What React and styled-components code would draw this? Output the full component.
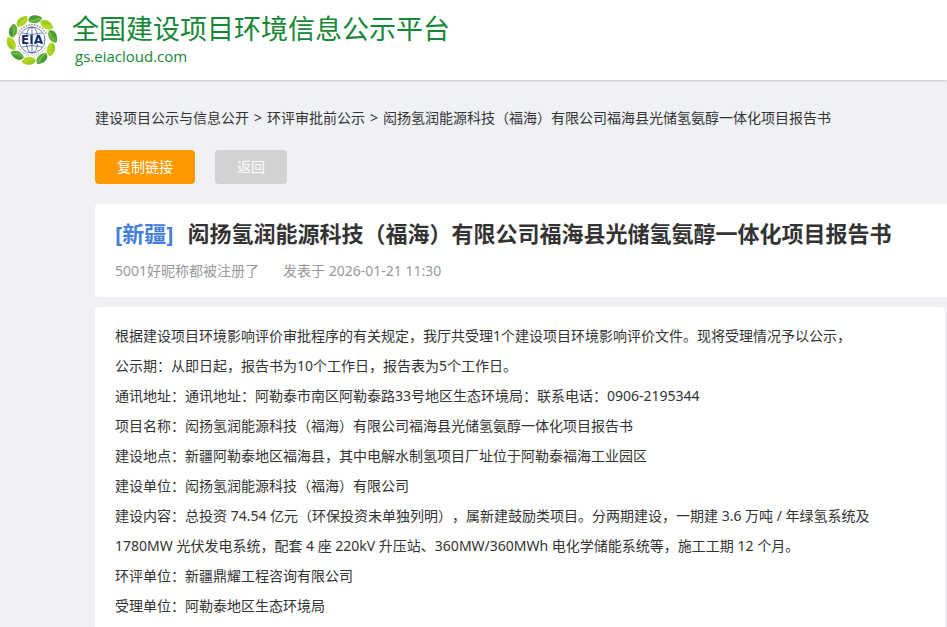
import React from 'react';
import styled, { createGlobalStyle } from 'styled-components';

const GlobalStyle = createGlobalStyle`
  * {
    box-sizing: border-box;
  }
  body {
    margin: 0;
    background: #f0f1f5;
    color: #333;
    font-family: 'Noto Sans', 'Noto Sans CJK SC', sans-serif;
    font-size: 14px;
    line-height: 20px;
    text-spacing-trim: space-all;
  }
`;

const Header = styled.header`
  display: flex;
  align-items: center;
  gap: 14px;
  height: 80px;
  padding: 0 6px;
  background: #fff;
  box-shadow: 0 1px 2px rgba(0, 0, 0, 0.18);
`;

const LogoSvg = styled.svg`
  flex: none;
  width: 52px;
  height: 52px;
`;

const Brand = styled.div`
  padding-bottom: 4px;
  color: #168736;
`;

const SiteName = styled.div`
  font-family: 'Noto Sans CJK SC', sans-serif;
  font-size: 27px;
  font-weight: 400;
  line-height: 36px;
`;

const Domain = styled.div`
  padding-left: 3px;
  font-family: 'Open Sans', sans-serif;
  font-size: 15px;
  line-height: 20px;
`;

const Main = styled.main`
  padding: 28px 0 0 95px;
`;

const Breadcrumb = styled.nav`
  display: flex;
  gap: 5px;

  a {
    color: inherit;
    text-decoration: none;
  }
`;

const Actions = styled.div`
  display: flex;
  gap: 20px;
  margin: 22px 0 20px;
`;

const Button = styled.button`
  height: 34px;
  padding: 0 22px;
  border: none;
  border-radius: 4px;
  background: ${({ $primary }) => ($primary ? '#ff9900' : '#d2d2d2')};
  color: #fff;
  font: inherit;
  cursor: pointer;
`;

const TitleCard = styled.section`
  padding: 14px 20px 16px;
  border-radius: 4px 0 0 4px;
  background: #fff;
`;

const Title = styled.h1`
  display: flex;
  gap: 14px;
  margin: 0 0 13px;
  font-size: 22px;
  font-weight: 700;
  line-height: 30px;
`;

const Region = styled.span`
  flex: none;
  color: #447ed9;
`;

const Meta = styled.div`
  display: flex;
  gap: 24px;
  color: #999;
`;

const Article = styled.article`
  margin: 10px 2px 0 0;
  padding: 14px 20px 20px;
  border-radius: 4px;
  background: #fff;

  p {
    margin: 0;
    line-height: 30px;
  }
`;

const project = '闳扬氢润能源科技（福海）有限公司福海县光储氢氨醇一体化项目报告书';

const paragraphs = [
  '根据建设项目环境影响评价审批程序的有关规定，我厅共受理1个建设项目环境影响评价文件。现将受理情况予以公示，',
  '公示期：从即日起，报告书为10个工作日，报告表为5个工作日。',
  '通讯地址：通讯地址：阿勒泰市南区阿勒泰路33号地区生态环境局：联系电话：0906-2195344',
  `项目名称：${project}`,
  '建设地点：新疆阿勒泰地区福海县，其中电解水制氢项目厂址位于阿勒泰福海工业园区',
  '建设单位：闳扬氢润能源科技（福海）有限公司',
  '建设内容：总投资 74.54 亿元（环保投资未单独列明），属新建鼓励类项目。分两期建设，一期建 3.6 万吨 / 年绿氢系统及 1780MW 光伏发电系统，配套 4 座 220kV 升压站、360MW/360MWh 电化学储能系统等，施工工期 12 个月。',
  '环评单位：新疆鼎耀工程咨询有限公司',
  '受理单位：阿勒泰地区生态环境局',
];

const leaves = [0, 1, 2, 3, 4, 5, 6, 7, 8, 9];

const Logo = () => (
  <LogoSvg viewBox='-26 -26 52 52' role='img' aria-label='EIA'>
    <defs>
      <linearGradient id='lime' x1='0' x2='1' y1='0' y2='1'>
        <stop offset='0' stopColor='#8cc51f' />
        <stop offset='1' stopColor='#c3dc12' />
      </linearGradient>
      <linearGradient id='green' x1='0' x2='1' y1='0' y2='1'>
        <stop offset='0' stopColor='#2c8c30' />
        <stop offset='1' stopColor='#7abb35' />
      </linearGradient>
    </defs>
    {leaves.map((i) => (
      <g key={i} transform={`rotate(${(i * 360) / leaves.length + 10})`}>
        <path
          d='M-7 -18 C-8 -24 -1 -27 6 -24 C6 -18 -1 -15 -7 -18Z'
          fill={i % 2 ? 'url(#lime)' : 'url(#green)'}
        />
        <path d='M-7 -18 Q0 -19 4 -23' fill='none' stroke='#d5eaa0' strokeWidth='0.4' />
      </g>
    ))}
    {/* ring of tiny lettering round the globe */}
    <path d='M-14 -6 A15.2 15.2 0 0 1 14 -6' fill='none' stroke='#a99a90' strokeWidth='1.6' strokeDasharray='1.6 1.2' />
    <path d='M-14 6 A15.2 15.2 0 0 0 14 6' fill='none' stroke='#b4bac6' strokeWidth='1.2' strokeDasharray='1 1' />
    <g fill='none' stroke='#344f8c' strokeWidth='0.7'>
      <circle r='13' />
      <ellipse rx='6' ry='13' />
      <path d='M0 -13V13M-13 0H13M-10 -7Q0 -4 10 -7M-10 7Q0 4 10 7' />
    </g>
    <rect x='-12' y='-5' width='24' height='9' fill='#fff' />
    <text
      y='4'
      textAnchor='middle'
      fontFamily='DejaVu Sans, sans-serif'
      fontSize='12'
      fontWeight='700'
      fill='#152a6b'>
      EIA
    </text>
  </LogoSvg>
);

const App = () => {
  return (
    <>
      <GlobalStyle />
      <Header>
        <Logo />
        <Brand>
          <SiteName>全国建设项目环境信息公示平台</SiteName>
          <Domain>gs.eiacloud.com</Domain>
        </Brand>
      </Header>
      <Main>
        <Breadcrumb>
          <a href='#public'>建设项目公示与信息公开</a>
          <span>&gt;</span>
          <a href='#approval'>环评审批前公示</a>
          <span>&gt;</span>
          <span>{project}</span>
        </Breadcrumb>
        <Actions>
          <Button type='button' $primary>
            复制链接
          </Button>
          <Button type='button'>返回</Button>
        </Actions>
        <TitleCard>
          <Title>
            <Region>[新疆]</Region>
            <span>{project}</span>
          </Title>
          <Meta>
            <span>5001好昵称都被注册了</span>
            <span>发表于 2026-01-21 11:30</span>
          </Meta>
        </TitleCard>
        <Article>
          {paragraphs.map((text) => (
            <p key={text}>{text}</p>
          ))}
        </Article>
      </Main>
    </>
  );
};

export default App;
